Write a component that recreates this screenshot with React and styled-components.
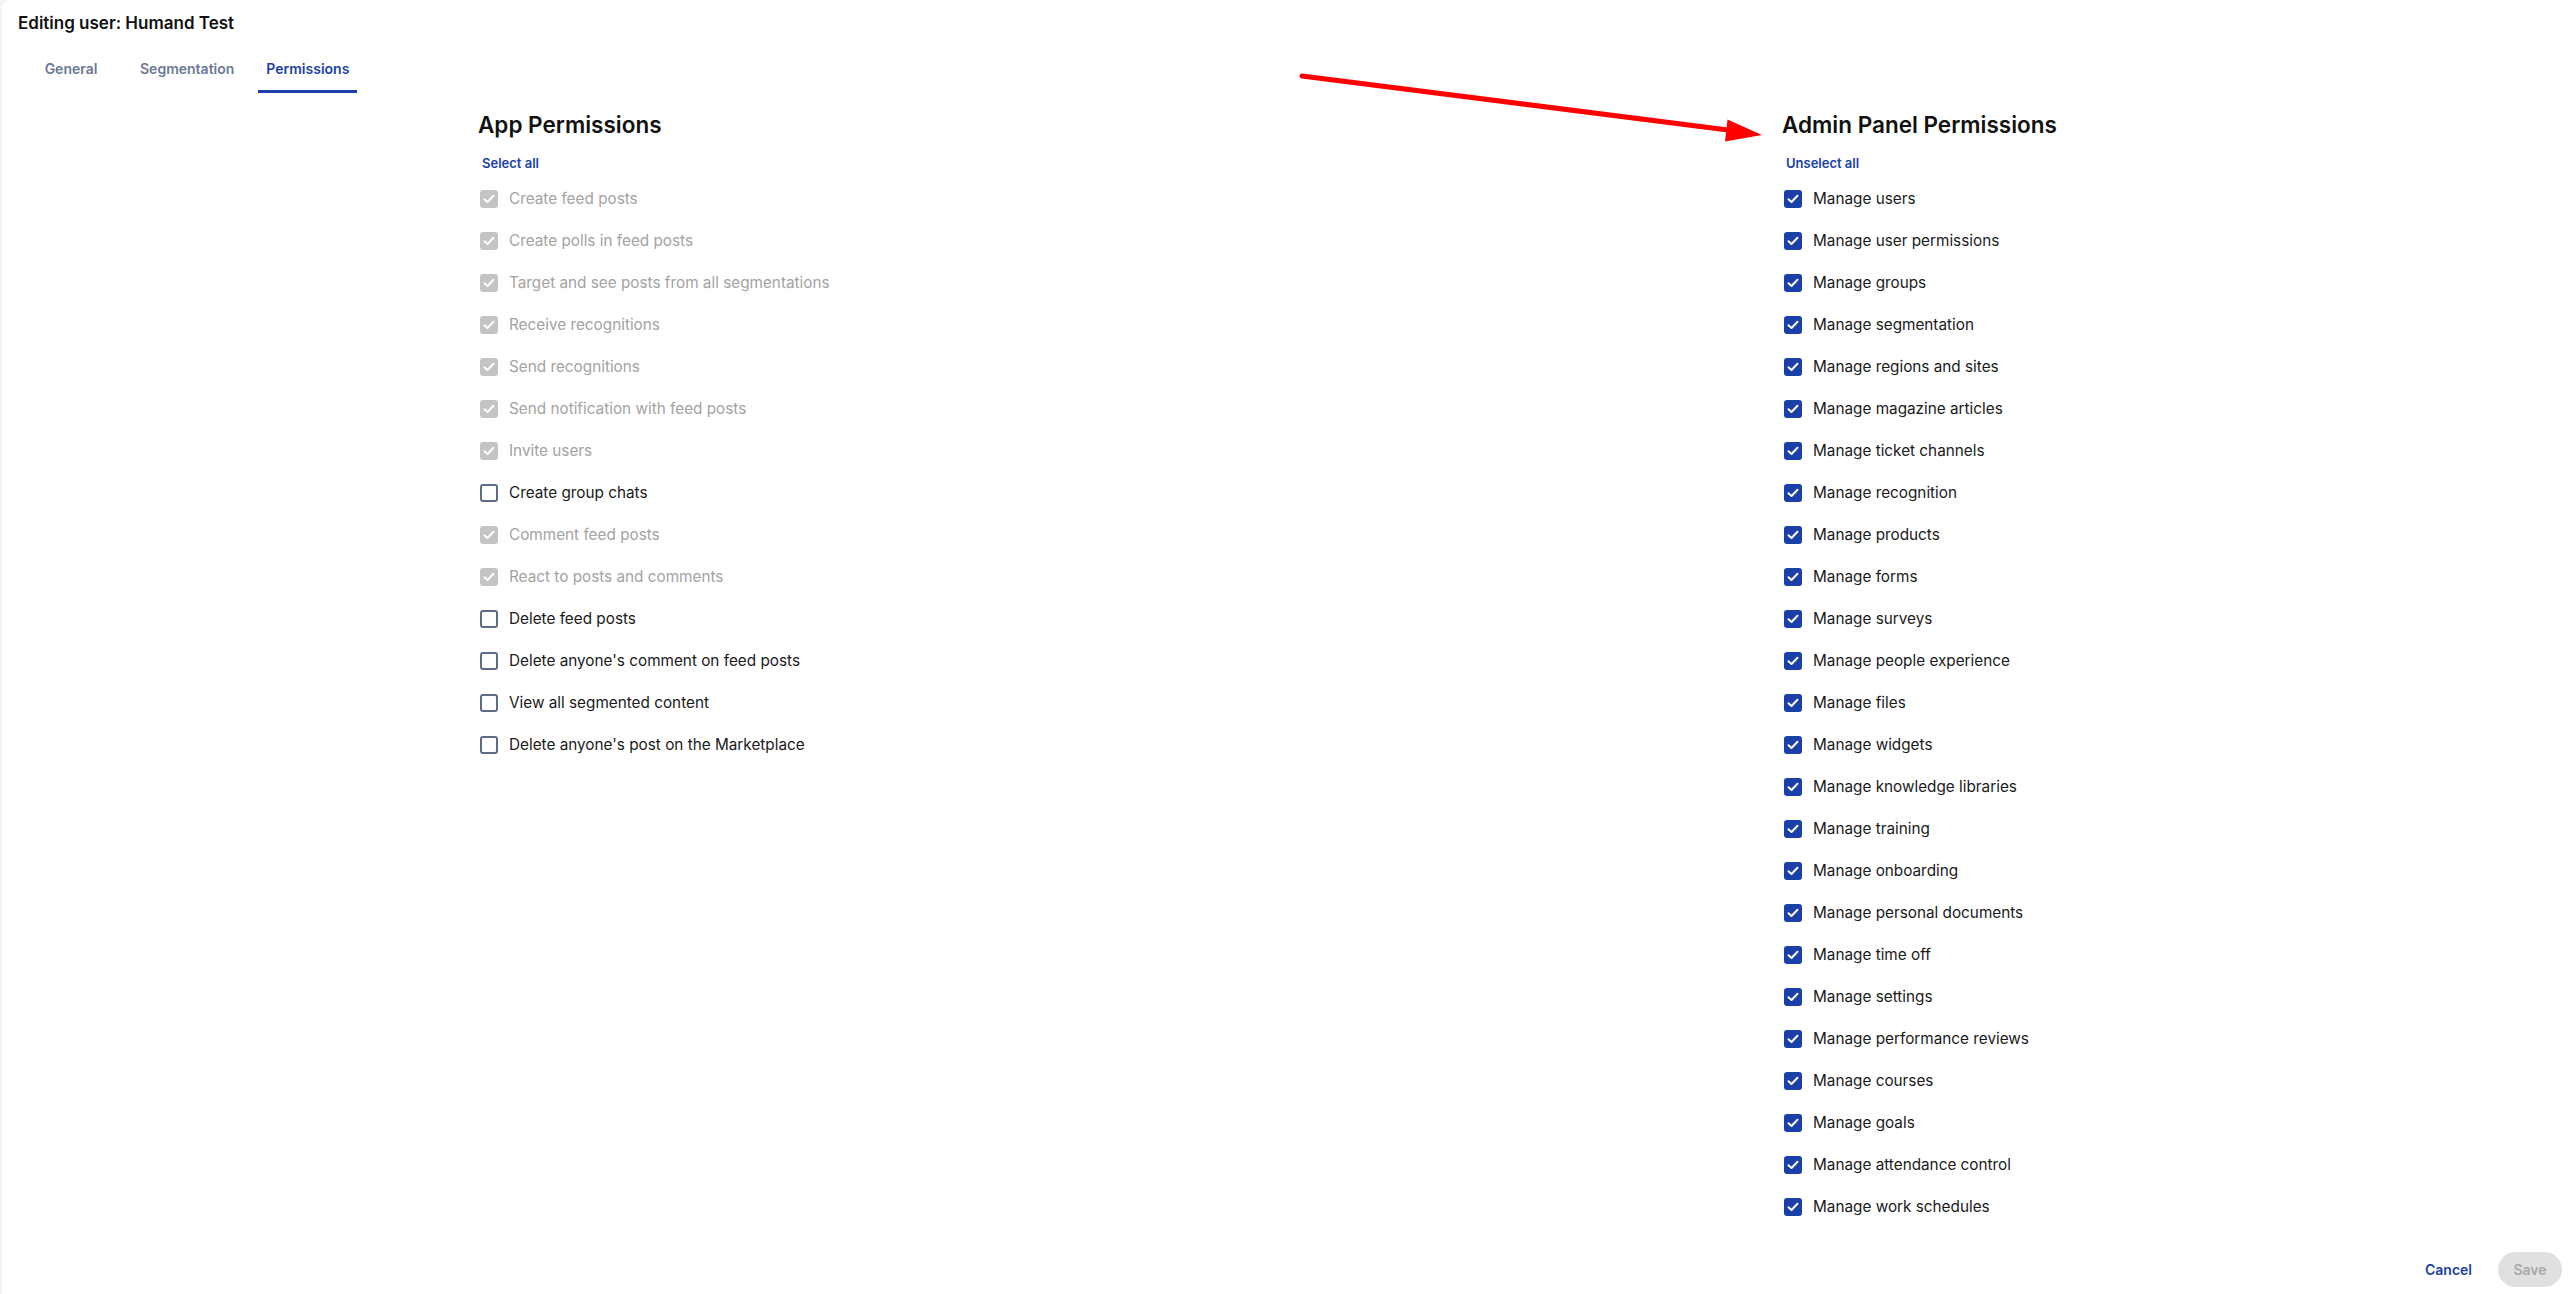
import React from 'react';
import styled, { createGlobalStyle } from 'styled-components';

const appPermissions = [
  { label: 'Create feed posts', state: 'locked' },
  { label: 'Create polls in feed posts', state: 'locked' },
  { label: 'Target and see posts from all segmentations', state: 'locked' },
  { label: 'Receive recognitions', state: 'locked' },
  { label: 'Send recognitions', state: 'locked' },
  { label: 'Send notification with feed posts', state: 'locked' },
  { label: 'Invite users', state: 'locked' },
  { label: 'Create group chats', state: 'off' },
  { label: 'Comment feed posts', state: 'locked' },
  { label: 'React to posts and comments', state: 'locked' },
  { label: 'Delete feed posts', state: 'off' },
  { label: "Delete anyone's comment on feed posts", state: 'off' },
  { label: 'View all segmented content', state: 'off' },
  { label: "Delete anyone's post on the Marketplace", state: 'off' },
];

const adminPermissions = [
  'Manage users',
  'Manage user permissions',
  'Manage groups',
  'Manage segmentation',
  'Manage regions and sites',
  'Manage magazine articles',
  'Manage ticket channels',
  'Manage recognition',
  'Manage products',
  'Manage forms',
  'Manage surveys',
  'Manage people experience',
  'Manage files',
  'Manage widgets',
  'Manage knowledge libraries',
  'Manage training',
  'Manage onboarding',
  'Manage personal documents',
  'Manage time off',
  'Manage settings',
  'Manage performance reviews',
  'Manage courses',
  'Manage goals',
  'Manage attendance control',
  'Manage work schedules',
];

const CheckMark = () => (
  <svg width="12" height="10" viewBox="0 0 12 10" fill="none">
    <path d="M1.5 5.2L4.5 8L10.5 1.8" stroke="#fff" strokeWidth="2" strokeLinecap="round" strokeLinejoin="round" />
  </svg>
);

const PermissionRow = ({ label, state }) => (
  <Row>
    <Box $state={state}>{state !== 'off' && <CheckMark />}</Box>
    <Label $muted={state === 'locked'}>{label}</Label>
  </Row>
);

const App = () => {
  return (
    <>
      <GlobalStyle />
      <Card>
        <Title>Editing user: Humand Test</Title>
        <Tabs>
          <Tab>General</Tab>
          <Tab>Segmentation</Tab>
          <Tab $active>Permissions</Tab>
        </Tabs>

        <Columns>
          <Column>
            <Heading>App Permissions</Heading>
            <LinkButton>Select all</LinkButton>
            <List>
              {appPermissions.map((p) => (
                <PermissionRow key={p.label} label={p.label} state={p.state} />
              ))}
            </List>
          </Column>
          <Column>
            <Heading>Admin Panel Permissions</Heading>
            <LinkButton>Unselect all</LinkButton>
            <List>
              {adminPermissions.map((label) => (
                <PermissionRow key={label} label={label} state="on" />
              ))}
            </List>
          </Column>
        </Columns>

        <Footer>
          <CancelButton>Cancel</CancelButton>
          <SaveButton disabled>Save</SaveButton>
        </Footer>

        <Arrow width="2574" height="200" viewBox="0 0 2574 200">
          <line x1="1302" y1="76" x2="1728" y2="130" stroke="#ff0000" strokeWidth="5" strokeLinecap="round" />
          <polygon points="1762,135 1727.5,119.5 1725,141.5" fill="#ff0000" />
        </Arrow>
      </Card>
    </>
  );
};

const GlobalStyle = createGlobalStyle`
  body {
    margin: 0;
    background: #f3f4f6;
    font-family: Inter, "Noto Sans", sans-serif;
    color: #111;
  }
`;

const Card = styled.div`
  position: relative;
  min-height: 100vh;
  margin-left: 2px;
  background: #ffffff;
  border-radius: 8px 0 0 0;
  display: flex;
  flex-direction: column;
  box-sizing: border-box;
`;

const Title = styled.h1`
  margin: 0;
  padding: 12px 0 0 16px;
  font-size: 17px;
  font-weight: 600;
  line-height: 22px;
  color: #111;
`;

const Tabs = styled.div`
  display: flex;
  gap: 16px;
  padding-left: 24px;
  margin-top: 25px;
`;

const Tab = styled.div`
  min-width: 90px;
  padding: 0 8px 11px;
  box-sizing: border-box;
  text-align: center;
  font-size: 14px;
  font-weight: 600;
  line-height: 20px;
  color: ${(p) => (p.$active ? '#1b3fa8' : '#6b7894')};
  border-bottom: 3px solid ${(p) => (p.$active ? '#1b3fa8' : 'transparent')};
`;

const Columns = styled.div`
  display: grid;
  grid-template-columns: 1304px 1fr;
  padding-left: 476px;
  margin-top: 17px;
`;

const Column = styled.div`
  display: flex;
  flex-direction: column;
  align-items: flex-start;
`;

const Heading = styled.h2`
  margin: 0;
  font-size: 22.5px;
  font-weight: 600;
  line-height: 30px;
  color: #111;
`;

const LinkButton = styled.button`
  margin: 14px 0 0 4px;
  padding: 0;
  border: none;
  background: none;
  font-family: inherit;
  font-size: 13px;
  font-weight: 600;
  line-height: 18px;
  color: #1b3fa8;
  cursor: pointer;
`;

const List = styled.div`
  display: flex;
  flex-direction: column;
  margin-top: 6px;
`;

const Row = styled.label`
  display: flex;
  align-items: center;
  gap: 11px;
  height: 42px;
  padding-left: 2px;
`;

const Box = styled.span`
  width: 18px;
  height: 18px;
  box-sizing: border-box;
  border-radius: 3px;
  display: flex;
  align-items: center;
  justify-content: center;
  background: ${(p) => (p.$state === 'on' ? '#1b3fa8' : p.$state === 'locked' ? '#c4c4c4' : '#ffffff')};
  border: ${(p) => (p.$state === 'off' ? '2px solid #5d6a84' : 'none')};
`;

const Label = styled.span`
  font-size: 15.3px;
  line-height: 20px;
  color: ${(p) => (p.$muted ? '#a3a3a3' : '#1a1a1a')};
`;

const Footer = styled.div`
  margin-top: auto;
  display: flex;
  justify-content: flex-end;
  align-items: center;
  gap: 18px;
  padding: 0 12px 7px 0;
`;

const CancelButton = styled.button`
  padding: 8px;
  border: none;
  background: none;
  font-family: inherit;
  font-size: 14px;
  font-weight: 600;
  color: #1b3fa8;
`;

const SaveButton = styled.button`
  width: 64px;
  height: 35px;
  border: none;
  border-radius: 18px;
  background: #e0e0e0;
  font-family: inherit;
  font-size: 14px;
  font-weight: 600;
  color: #a8a8a8;
`;

const Arrow = styled.svg`
  position: absolute;
  top: 0;
  left: -2px;
  pointer-events: none;
`;

export default App;
